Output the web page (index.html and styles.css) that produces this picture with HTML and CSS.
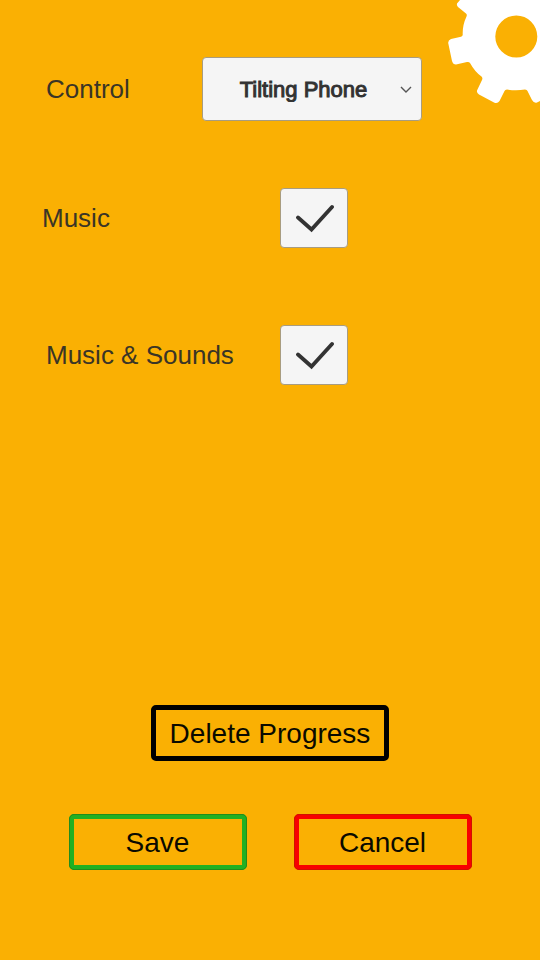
FILE: index.html
```html
<!DOCTYPE html>
<html lang="en">
<head>
<meta charset="utf-8">
<meta name="viewport" content="width=device-width, initial-scale=1">
<title>Settings</title>
<link rel="stylesheet" href="styles.css">
</head>
<body>
<svg class="gear" viewBox="0 0 92 104" aria-hidden="true">
  <path fill="#fff" fill-rule="evenodd" d="M12 0L9 3.500Q8.500 5.500 10 7L18 13.500Q19.300 14.500 18.500 16.500Q14.500 25 14.700 34Q15 36.300 13 36.700L3 39Q0 40 0.200 43L4 61Q5 64.500 8 64.500L19 62Q21 61.500 22 63Q27 72 33.500 76.500Q35 78 34 80L29 90.500Q28.500 93 31 94.500L46 102.500Q49.500 104 51.500 101L56.500 91Q57 89.500 59 89.500Q68 91 77 89.500Q79 89.500 79.500 91L84 100Q86 103.500 89 102.500L92 101V0Z M89.300 36.500A21 21 0 1 0 47.300 36.500A21 21 0 1 0 89.300 36.500Z"/>
</svg>
<main class="screen">
  <form class="settings">
    <div class="row">
      <label class="label" for="control">Control</label>
      <div class="picker">
        <select id="control" class="select">
          <option>Tilting Phone</option>
        </select>
        <svg class="chevron" viewBox="0 0 12 8" aria-hidden="true"><path d="M1 2L6 7L11 2" fill="none" stroke="#555" stroke-width="1.400"/></svg>
      </div>
    </div>
    <div class="row row-outdent">
      <label class="label label-wide" for="music">Music</label>
      <div class="toggle">
        <input id="music" class="checkbox" type="checkbox" checked>
        <svg class="tick" viewBox="0 0 40 30" aria-hidden="true"><path d="M4 14.500L17.500 26.500L38 4" fill="none" stroke="#333" stroke-width="3.800" stroke-linecap="round"/></svg>
      </div>
    </div>
    <div class="row">
      <label class="label label-wide" for="sounds">Music &amp; Sounds</label>
      <div class="toggle">
        <input id="sounds" class="checkbox" type="checkbox" checked>
        <svg class="tick" viewBox="0 0 40 30" aria-hidden="true"><path d="M4 14.500L17.500 26.500L38 4" fill="none" stroke="#333" stroke-width="3.800" stroke-linecap="round"/></svg>
      </div>
    </div>
  </form>
  <div class="actions">
    <button class="button button-delete" type="button">Delete Progress</button>
    <div class="pair">
      <button class="button button-save" type="button">Save</button>
      <button class="button button-cancel" type="button">Cancel</button>
    </div>
  </div>
</main>
</body>
</html>
```
FILE: styles.css
```css
* {
  box-sizing: border-box;
}

body {
  margin: 0;
  background: #fab003;
  color: #3a3526;
  font-family: "Liberation Sans", Arial, sans-serif;
  overflow-x: hidden;
}

.gear {
  position: absolute;
  top: 0;
  right: 0;
  width: 92px;
  height: 104px;
}

.screen {
  display: flex;
  flex-direction: column;
  justify-content: space-between;
  min-height: 100vh;
  padding: 57px 0 90px;
}

.settings {
  display: flex;
  flex-direction: column;
}

.row {
  display: flex;
  align-items: center;
  min-height: 64px;
  margin-bottom: 73px;
  padding-left: 46px;
}

.row-outdent {
  padding-left: 42px;
}

.row-outdent .label-wide {
  flex-basis: 238px;
}

.row:first-child {
  margin-bottom: 65px;
}

.label {
  flex: 0 0 156px;
  font-size: 26px;
  line-height: 30px;
}

.label-wide {
  flex-basis: 234px;
}

.picker,
.toggle {
  display: grid;
  align-items: center;
}

.select,
.checkbox {
  grid-area: 1 / 1;
  appearance: none;
  margin: 0;
  border: 1px solid #a89c80;
  border-radius: 4px;
  background: #f5f5f5;
}

.select {
  width: 220px;
  height: 64px;
  padding: 0 17px 0 0;
  color: #323232;
  font-family: inherit;
  font-size: 22px;
  text-align: center;
  text-align-last: center;
  -webkit-text-stroke: 1px #323232;
}

.chevron {
  grid-area: 1 / 1;
  justify-self: end;
  width: 12px;
  height: 8px;
  margin-right: 10px;
  pointer-events: none;
}

.checkbox {
  width: 68px;
  height: 60px;
}

.tick {
  grid-area: 1 / 1;
  justify-self: center;
  width: 40px;
  height: 30px;
  visibility: hidden;
  pointer-events: none;
}

.checkbox:checked + .tick {
  visibility: visible;
}

.actions {
  display: flex;
  flex-direction: column;
  align-items: center;
  gap: 53px;
}

.pair {
  display: flex;
  gap: 47px;
}

.button {
  width: 178px;
  height: 56px;
  padding: 2px 0 0;
  border: 5px solid;
  border-radius: 5px;
  background: transparent;
  color: #0a0a00;
  font-family: inherit;
  font-size: 28px;
  line-height: 32px;
}

.button-delete {
  width: 238px;
  border-color: #000;
}

.button-save {
  border-color: #22b022;
  outline: 1px solid #228c1c;
  outline-offset: -1px;
}

.button-cancel {
  border-color: #f80000;
  outline: 1px solid #d01000;
  outline-offset: -1px;
}
```
